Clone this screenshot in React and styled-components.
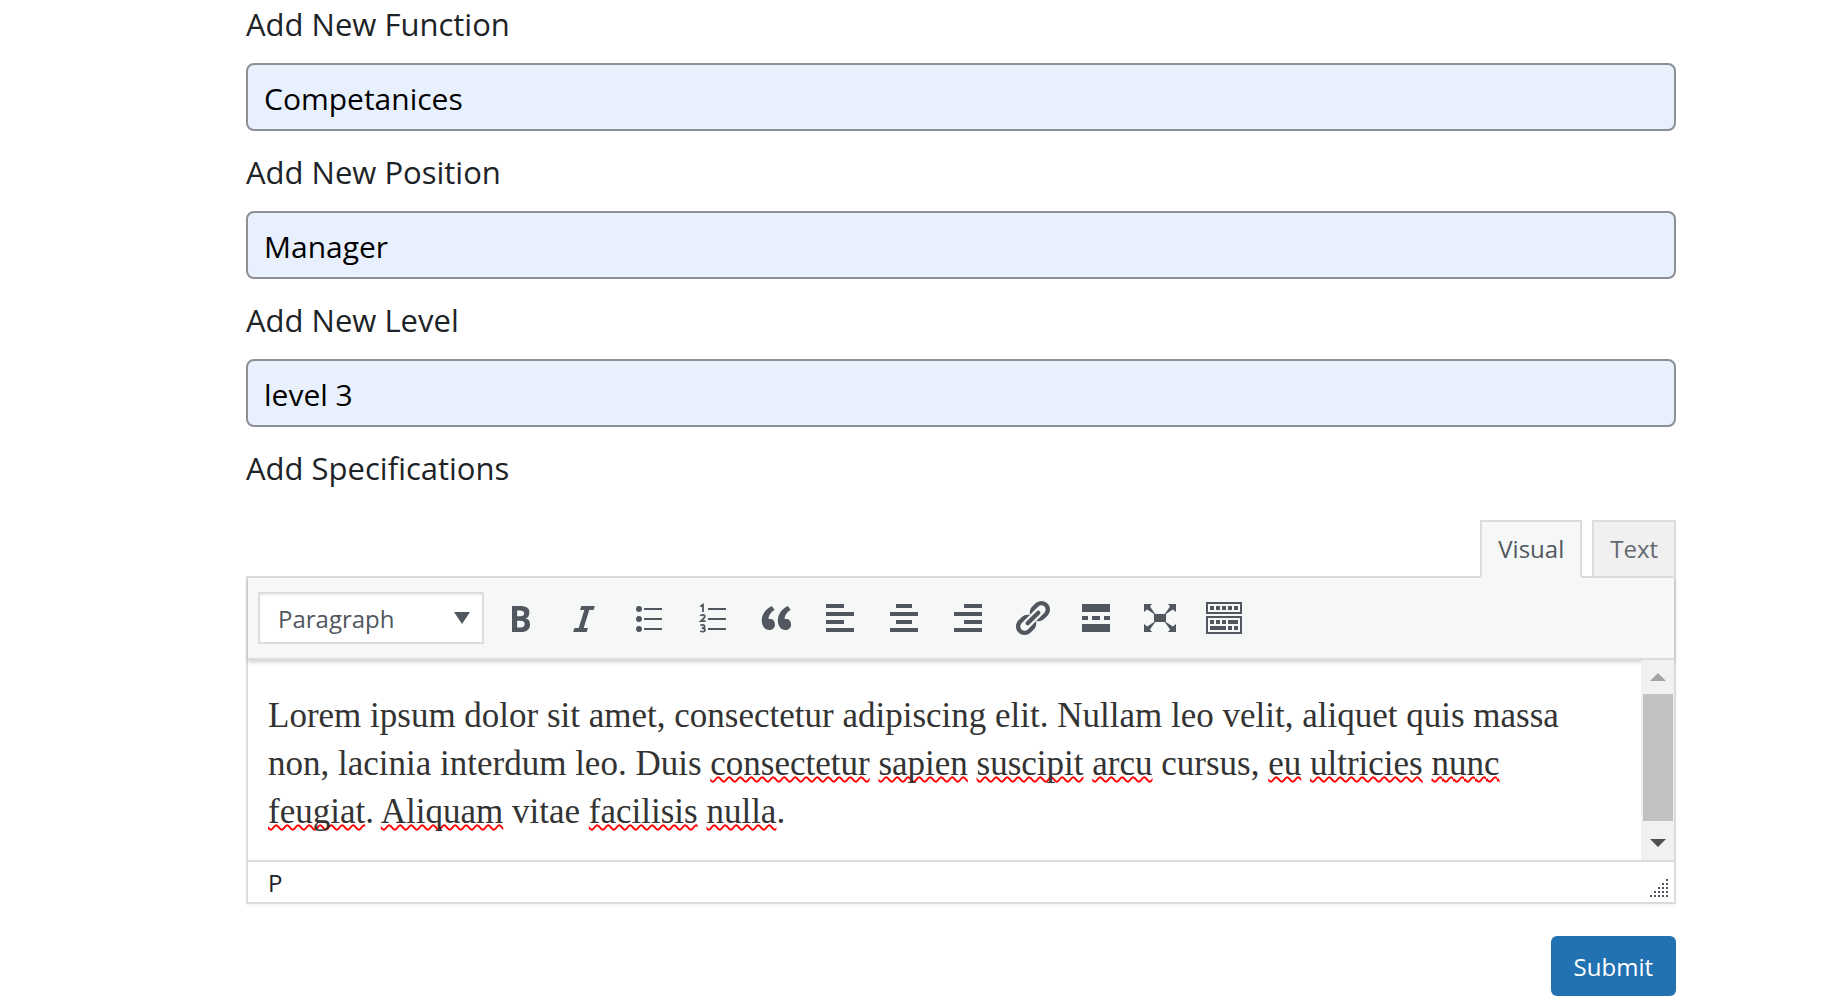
import React from "react";
import styled, { createGlobalStyle } from "styled-components";

const GlobalStyle = createGlobalStyle`
  *, *::before, *::after { box-sizing: border-box; }
  body {
    margin: 0;
    background: #fff;
    color: #1d2327;
    font-family: "Open Sans", "Noto Sans", sans-serif;
  }
`;

const Form = styled.form`
  display: flex;
  flex-direction: column;
  padding: 0 152px 12px 246px;
`;

const Field = styled.div`
  display: flex;
  flex-direction: column;
  gap: 14px;
  margin-bottom: 17px;
`;

const labelText = `
  font-size: 31px;
  line-height: 49px;
  font-weight: 400;
`;

const Label = styled.label`
  ${labelText}
`;

const SpecLabel = styled.div`
  ${labelText}
`;

const TextInput = styled.input`
  width: 100%;
  height: 68px;
  padding: 2px 16px 0;
  border: 2px solid #8c8f94;
  border-radius: 8px;
  background: #e8f0fe;
  color: #000;
  font: inherit;
  font-size: 30px;
`;

const Tabs = styled.div`
  display: flex;
  justify-content: flex-end;
  gap: 10px;
  margin-top: 27px;
`;

const Tab = styled.button`
  height: 58px;
  margin-bottom: -2px;
  padding: 0 16px 2px;
  border: 2px solid #dcdcde;
  border-bottom-color: ${(p) => (p.$active ? "#f6f7f7" : "#dcdcde")};
  background: ${(p) => (p.$active ? "#f6f7f7" : "#f0f0f1")};
  color: ${(p) => (p.$active ? "#50575e" : "#646970")};
  font: inherit;
  font-size: 24px;
  z-index: 1;
`;

const Editor = styled.section`
  border: 2px solid #dcdcde;
  box-shadow: 0 2px 2px rgba(0, 0, 0, 0.04);
`;

const Toolbar = styled.div`
  display: flex;
  align-items: center;
  gap: 4px;
  height: 82px;
  padding: 0 10px;
  border-bottom: 2px solid #dcdcde;
  background: #f6f7f7;
  box-shadow: 0 2px 4px rgba(0, 0, 0, 0.2);
`;

const FormatBox = styled.div`
  display: grid;
  align-items: center;
  width: 226px;
  margin-right: 2px;

  & > * { grid-area: 1 / 1; }
`;

const FormatSelect = styled.select`
  appearance: none;
  width: 100%;
  height: 52px;
  padding: 0 18px;
  border: 2px solid #dcdcde;
  border-radius: 0;
  background: #fff;
  box-shadow: inset 0 2px 2px rgba(0, 0, 0, 0.05);
  color: #50575e;
  font: inherit;
  font-size: 24px;
`;

const SelectArrow = styled.svg`
  justify-self: end;
  width: 16px;
  height: 12px;
  margin-right: 14px;
  fill: #50575e;
  pointer-events: none;
`;

const ToolButton = styled.button`
  display: flex;
  align-items: center;
  justify-content: center;
  width: 60px;
  height: 56px;
  padding: 0;
  border: 0;
  background: none;
  color: #50575e;

  svg {
    width: 40px;
    height: 40px;
    fill: currentColor;
  }
`;

const ContentRow = styled.div`
  display: flex;
  height: 200px;
`;

const Content = styled.div`
  flex: 1;
  min-width: 0;
  padding: 32px 16px 0 20px;
  outline: none;
  color: #333;
  font-family: "Liberation Serif", serif;
  font-size: 35px;
  line-height: 48px;
`;

const Paragraph = styled.p`
  margin: 0;
`;

const Misspelt = styled.span`
  text-decoration: underline wavy #f00 2px;
  text-decoration-skip-ink: none;
`;

const ScrollTrack = styled.div`
  display: flex;
  flex-direction: column;
  width: 33px;
  background: #f1f1f1;
`;

const ScrollButton = styled.button`
  display: flex;
  align-items: center;
  justify-content: center;
  width: 100%;
  height: 34px;
  padding: 0;
  border: 0;
  background: none;

  svg {
    width: 16px;
    height: 8px;
    fill: ${(p) => (p.$enabled ? "#505050" : "#a3a3a3")};
  }
`;

const ScrollRail = styled.div`
  flex: 1;
  padding: 0 1px 0 2px;
`;

const ScrollThumb = styled.div`
  height: 127px;
  background: #c1c1c1;
`;

const StatusBar = styled.footer`
  display: flex;
  align-items: center;
  justify-content: space-between;
  height: 42px;
  padding: 2px 6px 0 20px;
  border-top: 2px solid #dcdcde;
  font-size: 24px;
  line-height: 38px;
`;

const Grip = styled.svg`
  width: 20px;
  height: 20px;
  margin-top: 8px;
  fill: #50575e;
`;

const Submit = styled.button`
  align-self: flex-end;
  height: 60px;
  margin-top: 32px;
  padding: 0 23px;
  border: 0;
  border-radius: 6px;
  background: #2271b1;
  color: #fff;
  font: inherit;
  font-size: 24px;
`;

const fields = [
  { id: "function", label: "Add New Function", value: "Competanices" },
  { id: "position", label: "Add New Position", value: "Manager" },
  { id: "level", label: "Add New Level", value: "level 3" },
];

const tools = [
  { name: "Bold", path: "M6 4v13h4.54c1.37 0 2.46-.33 3.26-1 .8-.66 1.2-1.58 1.2-2.77 0-.84-.17-1.51-.51-2.01s-.9-.85-1.67-1.03v-.09c.57-.1 1.02-.4 1.36-.9s.51-1.13.51-1.91c0-1.14-.39-1.98-1.17-2.5C12.75 4.26 11.5 4 9.78 4H6zm2.57 5.15V6.26h1.36c.73 0 1.27.11 1.61.32.34.22.51.58.51 1.07 0 .54-.16.92-.47 1.15s-.82.35-1.51.35h-1.5zm0 2.19h1.6c1.44 0 2.16.53 2.16 1.61 0 .6-.17 1.05-.51 1.34s-.86.43-1.57.43H8.57v-3.38z" },
  { name: "Italic", path: "M14.78 6h-2.13l-2.8 9h2.12l-.62 2H4.6l.62-2h2.14l2.8-9H8.03l.62-2h6.75z" },
  { name: "Bulleted list", path: "M5.5 7a1.5 1.5 0 1 1 0-3 1.5 1.5 0 0 1 0 3zM8 5h9v1H8zM5.5 12a1.5 1.5 0 1 1 0-3 1.5 1.5 0 0 1 0 3zM8 10h9v1H8zM5.5 17a1.5 1.5 0 1 1 0-3 1.5 1.5 0 0 1 0 3zM8 15h9v1H8z" },
  {
    name: "Numbered list",
    path: "M8 5h9v1H8zM8 10h9v1H8zM8 15h9v1H8z",
    strokes: "M4.2 4.2 5.5 3.3V7M4.2 9c.4-.9 2.2-.8 2.2.3 0 .8-1 1.4-2 2.3h2.4M4.2 13.7c.8-.5 2.1-.4 2.1.4 0 .6-.5.9-1.4.9 1 0 1.6.3 1.6 1 0 .9-1.4 1-2.4.5",
  },
  { name: "Blockquote", path: "M9.49 13.22c0-.74-.2-1.38-.61-1.9-.62-.78-1.83-.88-2.53-.72-.29-1.65 1.11-3.75 2.92-4.65L7.88 4c-2.73 1.3-5.42 4.28-4.96 8.05C3.21 14.43 4.59 16 6.54 16c.85 0 1.56-.25 2.12-.75s.83-1.18.83-2.03zm8.05 0c0-.74-.2-1.38-.61-1.9-.63-.78-1.83-.88-2.53-.72-.29-1.65 1.11-3.75 2.92-4.65L15.93 4c-2.73 1.3-5.41 4.28-4.95 8.05.29 2.38 1.66 3.95 3.61 3.95.85 0 1.56-.25 2.12-.75s.83-1.18.83-2.03z" },
  { name: "Align left", path: "M3 3h9v2H3zM3 7h14v2H3zM3 11h9v2H3zM3 15h14v2H3z" },
  { name: "Align center", path: "M6 3h8v2H6zM3 7h14v2H3zM6 11h8v2H6zM3 15h14v2H3z" },
  { name: "Align right", path: "M8 3h9v2H8zM3 7h14v2H3zM8 11h9v2H8zM3 15h14v2H3z" },
  { name: "Insert link", path: "M17.74 2.76c1.68 1.69 1.68 4.41 0 6.1l-1.53 1.52c-1.12 1.12-2.7 1.47-4.14 1.09l2.62-2.61.76-.77.76-.76c.84-.84.84-2.2 0-3.04-.84-.85-2.2-.85-3.04 0l-.77.76-3.38 3.38c-.37-1.44-.02-3.02 1.1-4.14l1.52-1.53c1.69-1.68 4.42-1.68 6.1 0zM8.59 13.43l5.34-5.34c.42-.42.42-1.1 0-1.52-.44-.43-1.13-.39-1.53 0l-5.33 5.34c-.42.42-.42 1.1 0 1.52.44.43 1.13.39 1.52 0zm-.76 2.29l4.14-4.15c.38 1.44.03 3.02-1.09 4.14l-1.52 1.53c-1.69 1.68-4.41 1.68-6.1 0-1.68-1.68-1.68-4.42 0-6.1l1.53-1.52c1.12-1.12 2.7-1.47 4.14-1.1l-4.14 4.15c-.85.84-.85 2.2 0 3.05.84.84 2.2.84 3.04 0z" },
  { name: "Insert Read More tag", path: "M17 7V3H3v4h14zM6 11V9H3v2h3zm6 0V9H8v2h4zm5 0V9h-3v2h3zm0 6v-4H3v4h14z" },
  { name: "Fullscreen", path: "M7 8h6v4H7zM2 3h4L5 4.2 7.6 8H7L3.6 5.7 2 7zM18 3h-4l1 1.2L12.4 8h.6l3.4-2.3L18 7zM2 17h4l-1-1.2L7.6 12H7l-3.4 2.3L2 13zM18 17h-4l1-1.2-2.6-3.8h.6l3.4 2.3L18 13z" },
  { name: "Toolbar Toggle", path: "M19 2v6H1V2h18zm-1 5V3H2v4h16zM5 4v2H3V4h2zm3 0v2H6V4h2zm3 0v2H9V4h2zm3 0v2h-2V4h2zm3 0v2h-2V4h2zm2 5v9H1V9h18zm-1 8v-7H2v7h16zM5 11v2H3v-2h2zm3 0v2H6v-2h2zm3 0v2H9v-2h2zm6 0v2h-5v-2h5zm-6 3v2H3v-2h8zm3 0v2h-2v-2h2zm3 0v2h-2v-2h2z" },
];

const gripDots = [0, 1, 2, 3, 4].flatMap((row) =>
  Array.from({ length: row + 1 }, (_, i) => ({ x: 18 - i * 4, y: 2 + row * 4 }))
);

export default function App() {
  return (
    <>
      <GlobalStyle />
      <Form onSubmit={(e) => e.preventDefault()}>
        {fields.map((f) => (
          <Field key={f.id}>
            <Label htmlFor={f.id}>{f.label}</Label>
            <TextInput id={f.id} type="text" defaultValue={f.value} />
          </Field>
        ))}
        <SpecLabel id="spec-label">Add Specifications</SpecLabel>
        <Tabs>
          <Tab type="button" $active>Visual</Tab>
          <Tab type="button">Text</Tab>
        </Tabs>
        <Editor>
          <Toolbar>
            <FormatBox>
              <FormatSelect aria-label="Format">
                <option>Paragraph</option>
              </FormatSelect>
              <SelectArrow viewBox="0 0 16 12"><path d="M0 0h16L8 12z" /></SelectArrow>
            </FormatBox>
            {tools.map((t) => (
              <ToolButton key={t.name} type="button" aria-label={t.name}>
                <svg viewBox="0 0 20 20">
                  <path d={t.path} />
                  {t.strokes && (
                    <path d={t.strokes} fill="none" stroke="currentColor" strokeWidth="0.9" />
                  )}
                </svg>
              </ToolButton>
            ))}
          </Toolbar>
          <ContentRow>
            <Content
              role="textbox"
              aria-multiline="true"
              aria-labelledby="spec-label"
              contentEditable
              suppressContentEditableWarning
              spellCheck={false}
            >
              <Paragraph>
                Lorem ipsum dolor sit amet, consectetur adipiscing elit. Nullam leo velit, aliquet quis massa<br />
                non, lacinia interdum leo. Duis <Misspelt>consectetur</Misspelt> <Misspelt>sapien</Misspelt>{" "}
                <Misspelt>suscipit</Misspelt> <Misspelt>arcu</Misspelt> cursus, <Misspelt>eu</Misspelt>{" "}
                <Misspelt>ultricies</Misspelt> <Misspelt>nunc</Misspelt><br />
                <Misspelt>feugiat</Misspelt>. <Misspelt>Aliquam</Misspelt> vitae{" "}
                <Misspelt>facilisis</Misspelt> <Misspelt>nulla</Misspelt>.
              </Paragraph>
            </Content>
            <ScrollTrack>
              <ScrollButton type="button" aria-label="Scroll up">
                <svg viewBox="0 0 16 8"><path d="M0 8h16L8 0z" /></svg>
              </ScrollButton>
              <ScrollRail><ScrollThumb /></ScrollRail>
              <ScrollButton type="button" aria-label="Scroll down" $enabled>
                <svg viewBox="0 0 16 8"><path d="M0 0h16L8 8z" /></svg>
              </ScrollButton>
            </ScrollTrack>
          </ContentRow>
          <StatusBar>
            <span>P</span>
            <Grip viewBox="0 0 20 20">
              {gripDots.map((d) => (
                <rect key={`${d.x}-${d.y}`} x={d.x} y={d.y} width="2" height="2" />
              ))}
            </Grip>
          </StatusBar>
        </Editor>
        <Submit type="submit">Submit</Submit>
      </Form>
    </>
  );
}
